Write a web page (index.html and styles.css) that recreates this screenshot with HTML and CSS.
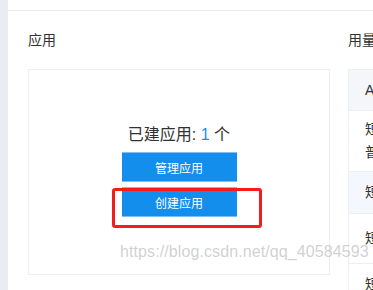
FILE: index.html
```html
<!DOCTYPE html>
<html lang="zh">
<head>
<meta charset="utf-8">
<link rel="stylesheet" href="styles.css">
</head>
<body>
<div class="app">
  <div class="sidebar"></div>
  <div class="main">
    <div class="topbar"></div>
    <div class="content">
      <section class="col-left">
        <h2 class="title">应用</h2>
        <div class="card">
          <div class="count">已建应用: <span class="num">1</span> 个</div>
          <button class="btn">管理应用</button>
          <button class="btn btn-second">创建应用</button>
          <div class="mark"></div>
        </div>
      </section>
      <section class="col-right">
        <h2 class="title">用量统计</h2>
        <div class="table">
          <div class="row head">API名称</div>
          <div class="row r1"><div>短信验证码<br>普通短信</div></div>
          <div class="row r2 hover">短信通知</div>
          <div class="row r3">短信营销</div>
          <div class="row r4">短信国际</div>
        </div>
      </section>
    </div>
  </div>
</div>
<div class="watermark">https://blog.csdn.net/qq_40584593</div>
</body>
</html>
```

FILE: styles.css
```css
html, body {
  margin: 0;
  padding: 0;
  height: 100%;
  overflow: hidden;
  background: #ffffff;
  font-family: "Liberation Sans", "Noto Sans CJK SC", sans-serif;
  color: #303133;
}

.app {
  display: flex;
  height: 290px;
}

.sidebar {
  width: 8px;
  flex: none;
  background: #e9ecf0;
}

.main {
  flex: 1;
  display: flex;
  flex-direction: column;
  min-width: 0;
}

.topbar {
  height: 10px;
  border-bottom: 1px solid #ebebeb;
  flex: none;
}

.content {
  display: flex;
  gap: 18px;
  padding: 19px 0 0 20px;
}

.title {
  margin: 0 0 19px 0;
  font-size: 14px;
  line-height: 20px;
  font-weight: normal;
  color: #303133;
  white-space: nowrap;
}

.col-left {
  width: 302px;
  flex: none;
}

.card {
  position: relative;
  border: 1px solid #ebeef5;
  display: flex;
  flex-direction: column;
  align-items: center;
  padding-top: 54px;
  box-sizing: border-box;
  height: 206px;
}

.count {
  font-size: 16px;
  line-height: 22px;
  color: #303133;
  margin-bottom: 6px;
}

.num {
  color: #1890ff;
}

.btn {
  width: 115px;
  height: 30px;
  border: none;
  border-top: 1px solid #7fbdf3;
  border-bottom: 1px solid #7fbdf3;
  background: #148eed;
  color: #ffffff;
  font-family: "Liberation Sans", "Noto Sans CJK SC", sans-serif;
  font-size: 12px;
  padding: 0;
  display: block;
}

.btn-second {
  margin-top: 5px;
}

.mark {
  position: absolute;
  left: 83px;
  top: 118px;
  width: 150px;
  height: 40px;
  box-sizing: border-box;
  border: 3px solid #f51c1c;
  border-radius: 3px;
}

.col-right {
  width: 300px;
  flex: none;
}

.table {
  border-left: 1px solid #ebeef5;
  border-top: 1px solid #ebeef5;
}

.row {
  display: flex;
  align-items: center;
  padding-left: 16px;
  font-size: 14px;
  line-height: 23px;
  color: #303133;
  border-bottom: 1px solid #ebeef5;
  white-space: nowrap;
}

.head {
  height: 40px;
  background: #f4f6fa;
  color: #333;
}

.r1 { height: 60px; }
.r2 { height: 41px; }
.r3 { height: 49px; }
.r4 { height: 40px; }

.hover {
  background: #f4f8fe;
}

.watermark {
  position: absolute;
  left: 120px;
  top: 243px;
  font-family: "Liberation Sans", sans-serif;
  font-size: 16px;
  color: rgba(170, 170, 170, 0.55);
  white-space: nowrap;
  letter-spacing: 0.1px;
}
```
